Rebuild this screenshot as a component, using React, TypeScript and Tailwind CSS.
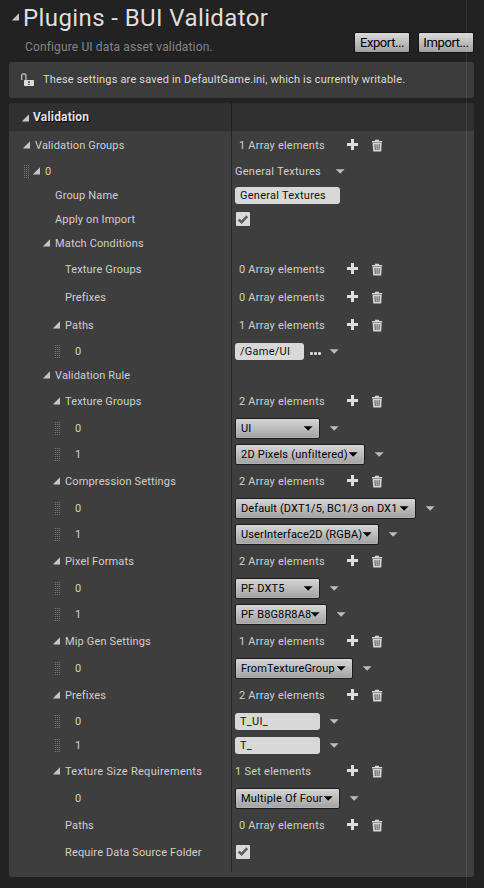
import type { ReactNode } from "react";

type Value =
  | { kind: "none" }
  | { kind: "count"; text: string; set?: boolean }
  | { kind: "summary"; text: string }
  | { kind: "input"; text: string; width: number; menu?: boolean; browse?: boolean }
  | { kind: "select"; text: string; width: number; fit?: "clip" | "wide" }
  | { kind: "check" };

interface RowData {
  h: number;
  x: number;
  label: string;
  wide?: boolean;
  open?: boolean;
  grip?: boolean;
  value: Value;
}

const count = (n: number): Value => ({ kind: "count", text: `${n} Array elements` });
const select = (text: string, width: number, fit?: "clip" | "wide"): Value => ({ kind: "select", text, width, fit });

const rows: RowData[] = [
  { h: 28, x: 35, label: "Validation Groups", open: true, value: count(1) },
  { h: 24, x: 45, label: "0", open: true, grip: true, value: { kind: "summary", text: "General Textures" } },
  { h: 24, x: 55, label: "Group Name", value: { kind: "input", text: "General Textures", width: 105 } },
  { h: 24, x: 55, label: "Apply on Import", value: { kind: "check" } },
  { h: 24, x: 55, label: "Match Conditions", open: true, value: { kind: "none" } },
  { h: 28, x: 65, label: "Texture Groups", value: count(0) },
  { h: 28, x: 65, label: "Prefixes", value: count(0) },
  { h: 28, x: 65, label: "Paths", open: true, value: count(1) },
  { h: 24, x: 75, label: "0", grip: true, value: { kind: "input", text: "/Game/UI", width: 69, menu: true, browse: true } },
  { h: 24, x: 55, label: "Validation Rule", open: true, value: { kind: "none" } },
  { h: 28, x: 65, label: "Texture Groups", open: true, value: count(2) },
  { h: 26, x: 75, label: "0", grip: true, value: select("UI", 85) },
  { h: 26, x: 75, label: "1", grip: true, value: select("2D Pixels (unfiltered)", 130, "wide") },
  { h: 28, x: 65, label: "Compression Settings", open: true, value: count(2) },
  { h: 26, x: 75, label: "0", grip: true, value: select("Default (DXT1/5, BC1/3 on DX11)", 181, "clip") },
  { h: 26, x: 75, label: "1", grip: true, value: select("UserInterface2D (RGBA)", 144) },
  { h: 28, x: 65, label: "Pixel Formats", open: true, value: count(2) },
  { h: 26, x: 75, label: "0", grip: true, value: select("PF DXT5", 85) },
  { h: 26, x: 75, label: "1", grip: true, value: select("PF B8G8R8A8", 92) },
  { h: 28, x: 65, label: "Mip Gen Settings", open: true, value: count(1) },
  { h: 26, x: 75, label: "0", grip: true, value: select("FromTextureGroup", 118) },
  { h: 28, x: 65, label: "Prefixes", open: true, value: count(2) },
  { h: 24, x: 75, label: "0", grip: true, value: { kind: "input", text: "T_UI_", width: 85, menu: true } },
  { h: 24, x: 75, label: "1", grip: true, value: { kind: "input", text: "T_", width: 85, menu: true } },
  { h: 28, x: 65, label: "Texture Size Requirements", wide: true, open: true, value: { kind: "count", text: "1 Set elements", set: true } },
  { h: 26, x: 75, label: "0", value: select("Multiple Of Four", 105, "wide") },
  { h: 28, x: 65, label: "Paths", value: count(0) },
  { h: 25, x: 65, label: "Require Data Source Folder", value: { kind: "check" } },
];

function Expander() {
  return (
    <svg width="8" height="8" viewBox="0 0 8 8" className="shrink-0">
      <path d="M8 0.3V7.4H0.8Z" fill="#c6c6c6" />
    </svg>
  );
}

function Grip() {
  return (
    <svg width="5" height="13" viewBox="0 0 5 13" className="shrink-0" shapeRendering="crispEdges">
      {[0, 2, 4].map((x) =>
        [0, 2, 4, 6, 8, 10, 12].map((y) => <rect key={`${x}-${y}`} x={x} y={y} width="1" height="1" fill="#757575" />),
      )}
    </svg>
  );
}

function Caret({ dark = false }: { dark?: boolean }) {
  return (
    <svg width="9" height="5" viewBox="0 0 9 5" className="shrink-0">
      <path d="M-0.2 0.2H8.6L4.2 4.8Z" fill={dark ? "#000" : "#bcbcbc"} />
    </svg>
  );
}

function Plus() {
  return (
    <svg width="11" height="11" viewBox="0 0 11 11" className="shrink-0">
      <path d="M4 0H7V4H11V7H7V11H4V7H0V4H4Z" fill="#dedede" />
    </svg>
  );
}

function Trash() {
  return (
    <svg width="11" height="13" viewBox="0 0 11 13" className="shrink-0">
      <path d="M0 1.9H3V0.8H7V1.9H10.2V3.6H0Z" fill="#dadada" />
      <path d="M0.6 4.1H9.7L9.2 12.6H1.2Z" fill="#d4d4d4" />
      <path d="M3 5.2L3.3 11M5.1 5.2V11M7.3 5.2L7 11" stroke="#484848" strokeWidth="0.9" />
    </svg>
  );
}

function Check() {
  return (
    <div className="ml-1 flex h-[14px] w-[14px] items-center justify-center rounded-[1px] bg-[#dadada]">
      <svg width="10" height="9" viewBox="0 0 10 9">
        <path d="M0.6 4.6L3.6 7.2L9.2 1.2" fill="none" stroke="#606060" strokeWidth="2.6" />
      </svg>
    </div>
  );
}

function Menu() {
  return (
    <div className="ml-[10px]">
      <Caret />
    </div>
  );
}

const selectText = {
  normal: "min-w-0 flex-1 pt-px tracking-[0.14px]",
  wide: "min-w-0 flex-1 pt-px tracking-[0.22px]",
  clip: "mr-[3px] min-w-0 flex-1 overflow-hidden pt-px tracking-[0.12px]",
};

function ValueCell({ value }: { value: Value }) {
  switch (value.kind) {
    case "count":
      return (
        <>
          <span className={value.set ? "w-[112px] pt-[2px] pl-[3px]" : "w-[112px] pt-[2px] pl-[7px] tracking-[0.22px]"}>
            {value.text}
          </span>
          <span className="mb-px ml-[3px]"><Plus /></span>
          <span className="ml-[14px]"><Trash /></span>
        </>
      );
    case "summary":
      return (
        <>
          <span className="w-[100px] pt-[2px] pl-[3px]">{value.text}</span>
          <span className="ml-1"><Caret /></span>
        </>
      );
    case "input":
      return (
        <>
          <div
            className="ml-[3px] flex h-[17px] items-center rounded-[3px] bg-[#d8d8d8] pt-px pl-[5px] text-[#101010]"
            style={{ width: value.width }}
          >
            {value.text}
          </div>
          {value.browse && (
            <div className="mt-[5px] ml-[6px] flex gap-px">
              {[0, 1, 2].map((i) => (
                <i key={i} className="h-[3px] w-[3px] rounded-[1px] bg-[#dadada]" />
              ))}
            </div>
          )}
          {value.menu && (value.browse ? <div className="ml-[9px]"><Caret /></div> : <Menu />)}
        </>
      );
    case "select":
      return (
        <>
          <div
            className="ml-[3px] flex h-[21px] items-center rounded-[2px] border border-[#1c1c1c] bg-linear-to-b from-[#d6d6d6] to-[#a2a2a2] pr-[6px] pl-[5px] text-black shadow-[inset_0_0_0_1px_#d8d8d840]"
            style={{ width: value.width }}
          >
            <span className={selectText[value.fit ?? "normal"]}>{value.text}</span>
            <span className="mt-[1px]"><Caret dark /></span>
          </div>
          <Menu />
        </>
      );
    case "check":
      return <Check />;
    default:
      return null;
  }
}

function Row({ row }: { row: RowData }) {
  return (
    <div className="flex" style={{ height: row.h }}>
      <div className="flex w-[222px] shrink-0 items-center">
        <div
          className={row.open ? "flex items-center justify-end gap-[3px] pr-[5px]" : "flex items-center justify-end pr-[15px]"}
          style={{ width: row.x - 9 }}
        >
          {row.grip && <Grip />}
          {row.open && <Expander />}
        </div>
        <span className={row.wide ? "pt-[2px] tracking-[0.28px]" : "pt-[2px] tracking-[0.15px]"}>{row.label}</span>
      </div>
      <div className="w-px shrink-0 bg-[#242424]" />
      <div className="flex flex-1 items-center">
        <ValueCell value={row.value} />
      </div>
    </div>
  );
}

function Button({ children }: { children: ReactNode }) {
  return (
    <button className="flex h-[21px] w-[56px] items-center justify-center rounded-[2px] border border-[#151515] bg-linear-to-b from-[#dadada] to-[#a2a2a2] text-[13px] leading-none tracking-[-0.4px] text-black">
      {children}
    </button>
  );
}

export default function App() {
  return (
    <div className="relative h-[888px] w-[484px] overflow-hidden bg-[#222] font-['Roboto','Liberation_Sans',sans-serif] text-[11px] leading-[14px] tracking-[0.25px] whitespace-nowrap text-[#cfcfcf]">
      <header className="flex h-[62px] pl-[11px]">
        <div className="pt-[13px]"><Expander /></div>
        <div className="w-[335px] shrink-0 pl-[4px]">
          <h1 className="pt-[2px] text-[24px] leading-[32px] tracking-[0.4px] text-[#dedede]">Plugins - BUI Validator</h1>
          <p className="pt-[6px] pl-[2px] text-[12px] tracking-[0.14px] text-[#858585]">Configure UI data asset validation.</p>
        </div>
        <div className="flex gap-[8px] pt-[32px]">
          <Button>Export...</Button>
          <Button>Import...</Button>
        </div>
      </header>
      <div className="ml-[9px] flex h-[36px] w-[465px] items-center rounded-[3px] bg-[#3c3c3c] pl-[12px] text-[#dadada]">
        <svg width="14" height="14" viewBox="0 0 14 14">
          <path d="M0.7 7V2.5Q0.7 0.9 2.8 0.9Q4.9 0.9 4.9 2.5V7" fill="none" stroke="#c8c8c8" strokeWidth="1.2" />
          <rect x="3" y="7" width="10" height="6" rx="0.8" fill="#dcdcdc" />
          <path d="M8 8V10.2M8 11V12" stroke="#444" strokeWidth="1.4" />
        </svg>
        <span className="pl-[8px] tracking-[0.18px]">These settings are saved in DefaultGame.ini, which is currently writable.</span>
      </div>
      <main className="mt-[5px] ml-[9px] h-[774px] w-[465px] overflow-hidden rounded-[3px] bg-[#3e3e3e]">
        <div className="flex h-[28px] bg-[#303030]">
          <div className="flex w-[222px] items-center gap-[4px] pl-[12px]">
            <span className="mt-[2px]"><Expander /></span>
            <span className="text-[12px] font-bold tracking-[0.2px] text-[#e2e2e2] [text-shadow:1px_1px_0_#000]">Validation</span>
          </div>
          <div className="w-px bg-[#1e1e1e]" />
        </div>
        {rows.map((row, i) => (
          <Row key={i} row={row} />
        ))}
        <div className="ml-[222px] h-[8px] w-px bg-[#242424]" />
      </main>
      <div className="pointer-events-none absolute top-0 left-[466px] h-full w-px bg-white/8" />
    </div>
  );
}
